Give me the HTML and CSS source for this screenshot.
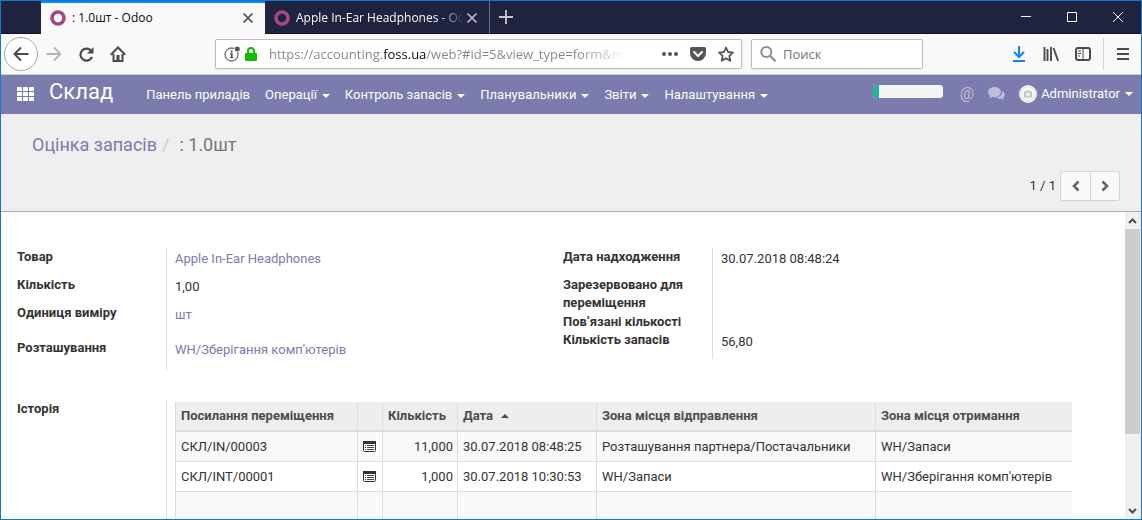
FILE: index.html
```html
<!DOCTYPE html>
<html lang="uk">
<head>
<meta charset="utf-8">
<title>: 1.0шт - Odoo</title>
<link rel="stylesheet" href="styles.css">
</head>
<body>
<div class="window">
  <header class="titlebar">
    <div class="tabs">
      <div class="tab tab-active">
        <svg class="favicon" viewBox="0 0 16 16"><circle cx="8" cy="8" r="6" fill="none" stroke="#a2478a" stroke-width="3.6"/></svg>
        <span class="tab-title">: 1.0шт - Odoo</span>
        <button class="tab-close" aria-label="Close tab"><svg viewBox="0 0 12 12"><path d="M1.5 1.5l9 9M10.500 1.500l-9 9" stroke="currentColor" stroke-width="1.700" fill="none"/></svg></button>
      </div>
      <div class="tab">
        <svg class="favicon" viewBox="0 0 16 16"><circle cx="8" cy="8" r="6" fill="none" stroke="#a2478a" stroke-width="3.6"/></svg>
        <span class="tab-title tab-title-fade">Apple In-Ear Headphones - Odoo</span>
        <button class="tab-close" aria-label="Close tab"><svg viewBox="0 0 12 12"><path d="M1.5 1.5l9 9M10.500 1.500l-9 9" stroke="currentColor" stroke-width="1.700" fill="none"/></svg></button>
      </div>
      <button class="tab-new" aria-label="New tab"><svg viewBox="0 0 14 14"><path d="M7 0v14M0 7h14" stroke="currentColor" stroke-width="1.800" fill="none"/></svg></button>
    </div>
    <div class="window-controls">
      <button aria-label="Minimize"><svg viewBox="0 0 10 10"><path d="M0 4.500h10" stroke="#fff" fill="none"/></svg></button>
      <button aria-label="Maximize"><svg viewBox="0 0 10 10"><path d="M.5.5h9v9h-9z" stroke="#fff" fill="none"/></svg></button>
      <button aria-label="Close"><svg viewBox="0 0 10 10"><path d="M0 0l10 10M10 0L0 10" stroke="#fff" fill="none"/></svg></button>
    </div>
  </header>

  <div class="toolbar">
    <div class="nav-buttons">
      <button class="back" aria-label="Back"><svg viewBox="0 0 16 16"><path d="M15.500 8H1.500M8 1.500L1.500 8L8 14.500" stroke="currentColor" stroke-width="2" fill="none"/></svg></button>
      <button class="tool forward" aria-label="Forward"><svg viewBox="0 0 16 16"><path d="M.5 8h14M8 1.500L14.500 8L8 14.500" stroke="currentColor" stroke-width="1.800" fill="none"/></svg></button>
      <button class="tool" aria-label="Reload"><svg viewBox="0 0 16 16"><path d="M13.300 5A6 6 0 1 0 14 11" stroke="currentColor" stroke-width="2.200" fill="none"/><path d="M15.500 1v6.500H9z" fill="currentColor"/></svg></button>
      <button class="tool" aria-label="Home"><svg viewBox="0 0 16 16"><path d="M.8 8.700L8 1.500l7.200 7.200M3.500 8v7h9V8" stroke="currentColor" stroke-width="2" fill="none"/><path d="M6.500 9h3v6h-3z" fill="currentColor"/></svg></button>
    </div>
    <div class="field url-field">
      <svg class="icon-info" viewBox="0 0 16 16"><circle cx="7.500" cy="8.500" r="6.500" fill="none" stroke="#737373" stroke-width="1.300"/><path d="M6.600 4.600h2v1.800h-2zM5.800 7.300h2.800v4h.9v1H5.800v-1h.9v-3h-.9z" fill="#555"/><circle cx="13.300" cy="3" r="3.200" fill="#fff"/><circle cx="13.300" cy="3" r="2.500" fill="#555"/></svg>
      <svg class="icon-lock" viewBox="0 0 12 14"><path d="M3 7V4a3 3 0 0 1 6 0v3" fill="none" stroke="#12bc00" stroke-width="2"/><rect y="6" width="12" height="8" rx="1" fill="#12bc00"/></svg>
      <input class="url" type="text" aria-label="Address" value="https://accounting.foss.ua/web?#id=5&amp;view_type=form&amp;menu_id=1">
      <button aria-label="Page actions"><svg viewBox="0 0 16 16"><g fill="#555"><circle cx="2" cy="8" r="2"/><circle cx="8" cy="8" r="2"/><circle cx="14" cy="8" r="2"/></g></svg></button>
      <button aria-label="Save to Pocket"><svg viewBox="0 0 16 16"><path d="M1.500 1h13A1.500 1.500 0 0 1 16 2.500V7A8 8 0 0 1 0 7V2.500A1.500 1.500 0 0 1 1.500 1z" fill="#555"/><path d="M4 6l4 4 4-4" fill="none" stroke="#fff" stroke-width="2" stroke-linecap="round"/></svg></button>
      <button aria-label="Bookmark"><svg viewBox="0 0 16 16"><path d="M8 1.500l2 4.500 5 .6-3.700 3.300 1 4.900L8 12.400l-4.300 2.400 1-4.900L1 6.600 6 6z" fill="none" stroke="#555" stroke-width="1.800" stroke-linejoin="round"/></svg></button>
    </div>
    <div class="field search-field">
      <svg viewBox="0 0 16 16"><circle cx="6.300" cy="6" r="5" fill="none" stroke="#8e8e8e" stroke-width="2"/><path d="M10 9.700l5.500 5.500" stroke="#8e8e8e" stroke-width="2.200"/></svg>
      <input type="text" aria-label="Поиск" placeholder="Поиск">
    </div>
    <div class="tools">
      <button class="tool download" aria-label="Downloads"><svg viewBox="0 0 16 16"><path d="M8 0v11M3 6l5 5 5-5M2 15h12" stroke="currentColor" stroke-width="2" fill="none"/></svg></button>
      <button class="tool" aria-label="Library"><svg viewBox="0 0 16 16"><path d="M1.500 1v14M4.500 3v12M8 1v14M10.500 2l4.700 13" stroke="currentColor" stroke-width="1.900" fill="none"/></svg></button>
      <button class="tool" aria-label="Sidebar"><svg viewBox="0 0 16 16"><rect x="1" y="2" width="14" height="12" rx="2" fill="none" stroke="currentColor" stroke-width="2"/><path d="M8 2v12M3 5h3M3 7.500h3M3 10h2" stroke="currentColor" fill="none"/></svg></button>
      <button class="tool menu" aria-label="Menu"><svg viewBox="0 0 16 16"><path d="M2 3h12M2 8h12M2 13h12" stroke="currentColor" stroke-width="2" fill="none"/></svg></button>
    </div>
  </div>

  <nav class="odoo-nav">
    <a class="apps" href="#" aria-label="Apps"><svg viewBox="0 0 17 14"><g fill="#fff"><rect width="5" height="4" rx=".6"/><rect x="6" width="5" height="4" rx=".6"/><rect x="12" width="5" height="4" rx=".6"/><rect y="5" width="5" height="4" rx=".6"/><rect x="6" y="5" width="5" height="4" rx=".6"/><rect x="12" y="5" width="5" height="4" rx=".6"/><rect y="10" width="5" height="4" rx=".6"/><rect x="6" y="10" width="5" height="4" rx=".6"/><rect x="12" y="10" width="5" height="4" rx=".6"/></g></svg></a>
    <a class="brand" href="#">Склад</a>
    <div class="menus">
      <a href="#">Панель приладів</a>
      <a href="#">Операції<span class="caret"></span></a>
      <a href="#">Контроль запасів<span class="caret"></span></a>
      <a href="#">Планувальники<span class="caret"></span></a>
      <a href="#">Звіти<span class="caret"></span></a>
      <a href="#">Налаштування<span class="caret"></span></a>
    </div>
    <div class="systray">
      <div class="planner"><div class="planner-bar"></div></div>
      <a class="mention" href="#">@</a>
      <a class="chat" href="#" aria-label="Messages"><svg viewBox="0 0 17 14"><path d="M6.500 0C10 0 13 2.200 13 5s-3 5-6.500 5c-.7 0-1.300 0-1.900-.2C3.500 10.600 2.200 11.200.9 11.300c.8-.7 1.300-1.500 1.400-2.400C.9 8 0 6.600 0 5c0-2.800 3-5 6.500-5z" fill="#bebdda"/><path d="M14.200 4c1.600.8 2.600 2.100 2.600 3.500 0 1.300-.8 2.500-2 3.300.1.800.6 1.500 1.300 2.100-1.300-.1-2.500-.6-3.500-1.300-2 .4-4.300.1-5.900-1 4.200.2 8-2.300 7.500-6.600z" fill="#bebdda"/></svg></a>
      <a class="user" href="#">
        <svg viewBox="0 0 18 18"><circle cx="9" cy="9" r="9" fill="#f5f5f5"/><circle cx="9" cy="9" r="7.500" fill="none" stroke="#e2e2e2"/><path d="M5 6.500h2l1-1h2.500l1 1H13v6H5z" fill="#c4c4c4"/><circle cx="9" cy="9.300" r="2" fill="#eee"/></svg>
        <span>Administrator</span><span class="caret"></span>
      </a>
    </div>
  </nav>

  <section class="control-panel">
    <div class="breadcrumb"><a href="#">Оцінка запасів</a><span class="slash">/</span><span>: 1.0шт</span></div>
    <div class="pager">
      <span>1 / 1</span>
      <div class="pager-buttons">
        <button aria-label="Previous"><svg viewBox="0 0 12 12"><path d="M8.500 1.500L4 6l4.500 4.500" fill="none" stroke="#666" stroke-width="2.600"/></svg></button>
        <button aria-label="Next"><svg viewBox="0 0 12 12"><path d="M3.500 1.500L8 6l-4.500 4.500" fill="none" stroke="#666" stroke-width="2.600"/></svg></button>
      </div>
    </div>
  </section>

  <main class="content">
    <div class="sheet">
      <div class="groups">
        <dl class="group">
          <div class="row"><dt>Товар</dt><dd><a href="#">Apple In-Ear Headphones</a></dd></div>
          <div class="row"><dt>Кількість</dt><dd>1,00</dd></div>
          <div class="row row-tall"><dt>Одиниця виміру</dt><dd><a href="#">шт</a></dd></div>
          <div class="row row-last"><dt>Розташування</dt><dd><a href="#">WH/Зберігання комп'ютерів</a></dd></div>
        </dl>
        <dl class="group">
          <div class="row"><dt>Дата надходження</dt><dd>30.07.2018 08:48:24</dd></div>
          <div class="row row-double"><dt>Зарезервовано для переміщення</dt><dd></dd></div>
          <div class="row row-short"><dt>Пов’язані кількості</dt><dd></dd></div>
          <div class="row"><dt>Кількість запасів</dt><dd>56,80</dd></div>
        </dl>
      </div>
      <div class="history">
        <div class="history-label">Історія</div>
        <div class="history-body">
          <table>
            <colgroup><col class="c-ref"><col class="c-icon"><col class="c-qty"><col class="c-date"><col class="c-from"><col></colgroup>
            <thead>
              <tr><th>Посилання переміщення</th><th></th><th>Кількість</th><th>Дата<span class="sort"></span></th><th>Зона місця відправлення</th><th>Зона місця отримання</th></tr>
            </thead>
            <tbody>
              <tr><td>СКЛ/IN/00003</td><td class="icon"><svg viewBox="0 0 13 11"><rect x=".5" y=".5" width="12" height="10" rx="1" fill="#fff" stroke="#333"/><path d="M0 0h13v3H0z" fill="#333"/><path d="M2 4.500h1M4 4.500h7M2 6.500h1M4 6.500h7M2 8.500h1M4 8.500h7" stroke="#444"/></svg></td><td class="num">11,000</td><td>30.07.2018 08:48:25</td><td>Розташування партнера/Постачальники</td><td>WH/Запаси</td></tr>
              <tr><td>СКЛ/INT/00001</td><td class="icon"><svg viewBox="0 0 13 11"><rect x=".5" y=".5" width="12" height="10" rx="1" fill="#fff" stroke="#333"/><path d="M0 0h13v3H0z" fill="#333"/><path d="M2 4.500h1M4 4.500h7M2 6.500h1M4 6.500h7M2 8.500h1M4 8.500h7" stroke="#444"/></svg></td><td class="num">1,000</td><td>30.07.2018 10:30:53</td><td>WH/Запаси</td><td>WH/Зберігання комп'ютерів</td></tr>
              <tr><td></td><td></td><td></td><td></td><td></td><td></td></tr>
            </tbody>
          </table>
        </div>
      </div>
    </div>
    <div class="scrollbar">
      <svg viewBox="0 0 15 17"><path d="M4 11l3.500-3.500L11 11" fill="none" stroke="#505050" stroke-width="2"/></svg>
      <div class="track"><div class="thumb"></div></div>
      <svg viewBox="0 0 15 17"><path d="M4 7l3.500 3.500L11 7" fill="none" stroke="#505050" stroke-width="2"/></svg>
    </div>
  </main>
</div>
</body>
</html>
```

FILE: styles.css
```css
* { box-sizing: border-box; }

body {
  margin: 0;
  font: 13px/18px Roboto, "Noto Sans", sans-serif;
  color: #333;
}

a { color: #7c7bad; text-decoration: none; }
svg { display: block; flex: none; }

button {
  display: flex;
  align-items: center;
  justify-content: center;
  padding: 0;
  border: 0;
  background: none;
  color: inherit;
}

input {
  min-width: 0;
  padding: 0;
  border: 0;
  outline: 0;
  background: none;
}

.window {
  display: flex;
  flex-direction: column;
  height: 100vh;
  border: 1px solid #0f78d0;
  overflow: hidden;
  background: #fff;
}

/* Browser title bar */
.titlebar {
  display: flex;
  flex: none;
  justify-content: space-between;
  height: 33px;
  padding-left: 40px;
  border-bottom: 1px solid #150c26;
  background: #20233f;
  font: 12px/16px "Open Sans", "Noto Sans", sans-serif;
}

.tabs { display: flex; }

.tab {
  display: flex;
  align-items: center;
  width: 225px;
  height: 33px;
  padding: 0 11px 0 9px;
  border-right: 1px solid #6b6d80;
  color: #f9f9fa;
}

.tab-active {
  width: 224px;
  border-right: 0;
  box-shadow: inset 0 2px #0a84ff;
  background: #f9f9fa;
  color: #0c0c0d;
}

.favicon { width: 16px; height: 16px; }
.tab-title { flex: 1; margin: 0 2px 0 6px; overflow: hidden; white-space: nowrap; }
.tab-title-fade { mask-image: linear-gradient(to left, transparent, #000 24px); }
.tab-close { color: #4a4a4f; }
.tab:not(.tab-active) .tab-close { color: #b9bac4; }
.tab-close svg { width: 12px; height: 12px; }
.tab-new { width: 32px; color: #c6c7cf; }
.tab-new svg { width: 14px; height: 14px; }

.window-controls { display: flex; }
.window-controls button { width: 46px; }
.window-controls svg { width: 10px; height: 10px; }

/* Browser toolbar */
.toolbar {
  display: flex;
  flex: none;
  align-items: center;
  height: 41px;
  border-bottom: 1px solid #d0d0d0;
  background: #f9f9fa;
  color: #4a4a4f;
}

.nav-buttons { display: flex; flex: none; align-items: center; width: 214px; padding-left: 3px; }

.back {
  width: 34px;
  height: 34px;
  border: 1px solid #a8a8aa;
  border-radius: 50%;
  background: #fff;
}

.tool { width: 32px; height: 32px; }
.back svg, .tool svg { width: 16px; height: 16px; }
.forward { color: #b4b4b6; }

.field {
  display: flex;
  align-items: center;
  height: 30px;
  border: 1px solid #bdbdbe;
  border-radius: 2px;
  background: #fff;
  box-shadow: 0 1px 3px #0000000d;
}

.field input { font: 13px/20px "Open Sans", "Noto Sans", sans-serif; }
.url-field { flex: 1; min-width: 0; padding: 0 1px 0 8px; }
.icon-info { width: 16px; height: 16px; }
.icon-lock { width: 12px; height: 14px; margin: 0 12px 0 5px; }

.url {
  flex: 1;
  color: transparent;
  background: linear-gradient(to right, #858585 115px, #0c0c0d 115px 157px, #858585 157px 310px, transparent 356px);
  background-clip: text;
  -webkit-background-clip: text;
}

.url-field button { width: 28px; height: 28px; }
.url-field button:first-of-type { margin-left: 28px; }
.url-field svg { max-width: 16px; }

.search-field { width: 172px; margin-left: 9px; padding-left: 8px; gap: 7px; }
.search-field svg { width: 16px; height: 16px; }
.search-field input { flex: 1; }
.search-field input::placeholder { color: #737373; }

.tools { display: flex; flex: none; margin-left: 80px; }
.download { color: #0a84ff; }
.menu { width: 38px; margin-left: 4px; border-left: 1px solid #d7d7db; }

/* Application menu */
.odoo-nav {
  display: flex;
  flex: none;
  align-items: center;
  height: 39px;
  padding: 0 8px 0 16px;
  background: #7c7bad;
}

.odoo-nav a { color: #fff; }
.apps { padding-bottom: 2px; }
.apps svg { width: 17px; height: 14px; }
.brand { margin-left: 15px; padding-bottom: 6px; font-size: 22px; line-height: 24px; }
.menus { display: flex; gap: 15px; margin-left: 33px; white-space: nowrap; }

.caret {
  display: inline-block;
  margin-left: 5px;
  border: 4px solid transparent;
  border-top-color: currentColor;
  border-bottom: 0;
  vertical-align: 1px;
}

.systray { display: flex; align-items: center; margin-left: auto; padding-bottom: 2px; }
.planner { width: 70px; height: 13px; margin: 0 17px 4px 0; border-radius: 3px; background: #f5f5f5; overflow: hidden; }
.planner-bar { width: 6px; height: 100%; background: #21b799; }
.odoo-nav .mention { color: #bebdda; font-size: 16px; }
.chat { margin: 0 14px; }
.chat svg { width: 17px; height: 14px; }
.user { display: flex; align-items: center; }
.user svg { width: 18px; height: 18px; margin-right: 4px; }

/* Breadcrumb and pager */
.control-panel {
  display: flex;
  flex: none;
  flex-direction: column;
  justify-content: space-between;
  height: 98px;
  padding: 20px 21px 10px 31px;
  border-bottom: 1px solid #a8a8a8;
  background: #f0eeee;
}

.breadcrumb { font-size: 18px; line-height: 22px; color: #777; }
.slash { padding: 0 10px 0 5px; color: #ccc; }
.pager { display: flex; align-items: center; justify-content: flex-end; gap: 4px; }
.pager-buttons { display: flex; border: 1px solid #d3d3d3; border-radius: 3px; background: #fafafa; }
.pager-buttons button { width: 29px; height: 28px; }
.pager-buttons button + button { border-left: 1px solid #d3d3d3; }
.pager-buttons svg { width: 12px; height: 12px; }

/* Form */
.content { display: flex; flex: 1; min-height: 0; }
.sheet { flex: 1; min-width: 0; padding: 36px 16px 0; overflow: hidden; }
.groups { display: grid; grid-template-columns: 1fr 1fr; align-items: start; }
.group { margin: 0; }
.row { display: grid; grid-template-columns: 149px 1fr; min-height: 28px; }
.row-tall { min-height: 35px; }
.row-last { min-height: 31px; }
.row-double { min-height: 37px; }
.row-short { min-height: 18px; }
.row dt { padding-right: 16px; font-weight: 700; }
.row dd { margin: 0; padding: 2px 8px 0; border-left: 1px solid #ddd; }

.history { display: grid; grid-template-columns: 149px 1fr; margin-top: 30px; }
.history-label { font-weight: 700; }
.history-body { min-height: 200px; padding: 2px 37px 0 8px; border-left: 1px solid #ddd; }

table { width: 100%; table-layout: fixed; border-collapse: separate; border-spacing: 0; }
.c-ref { width: 182px; }
.c-icon { width: 25px; }
.c-qty { width: 75px; }
.c-date { width: 139px; }
.c-from { width: 279px; }

th, td {
  height: 30px;
  padding: 0 5px;
  border-left: 1px solid #ddd;
  border-bottom: 1px solid #ddd;
  text-align: left;
  white-space: nowrap;
}

th { border-bottom-width: 2px; background: #eee; color: #4c4c4c; }
tbody tr:nth-child(odd) { background: #f9f9f9; }
td.num { padding-right: 4px; text-align: right; }
td.icon svg { width: 13px; height: 11px; }

.sort {
  display: inline-block;
  margin-left: 8px;
  border: 4px solid transparent;
  border-bottom-color: currentColor;
  border-top: 0;
  vertical-align: 2px;
}

.scrollbar { display: flex; flex: none; flex-direction: column; width: 16px; padding-right: 1px; background: #f0f0f0; }
.scrollbar svg { width: 15px; height: 17px; }
.track { flex: 1; }
.thumb { height: 75%; background: #cdcdcd; }
```
